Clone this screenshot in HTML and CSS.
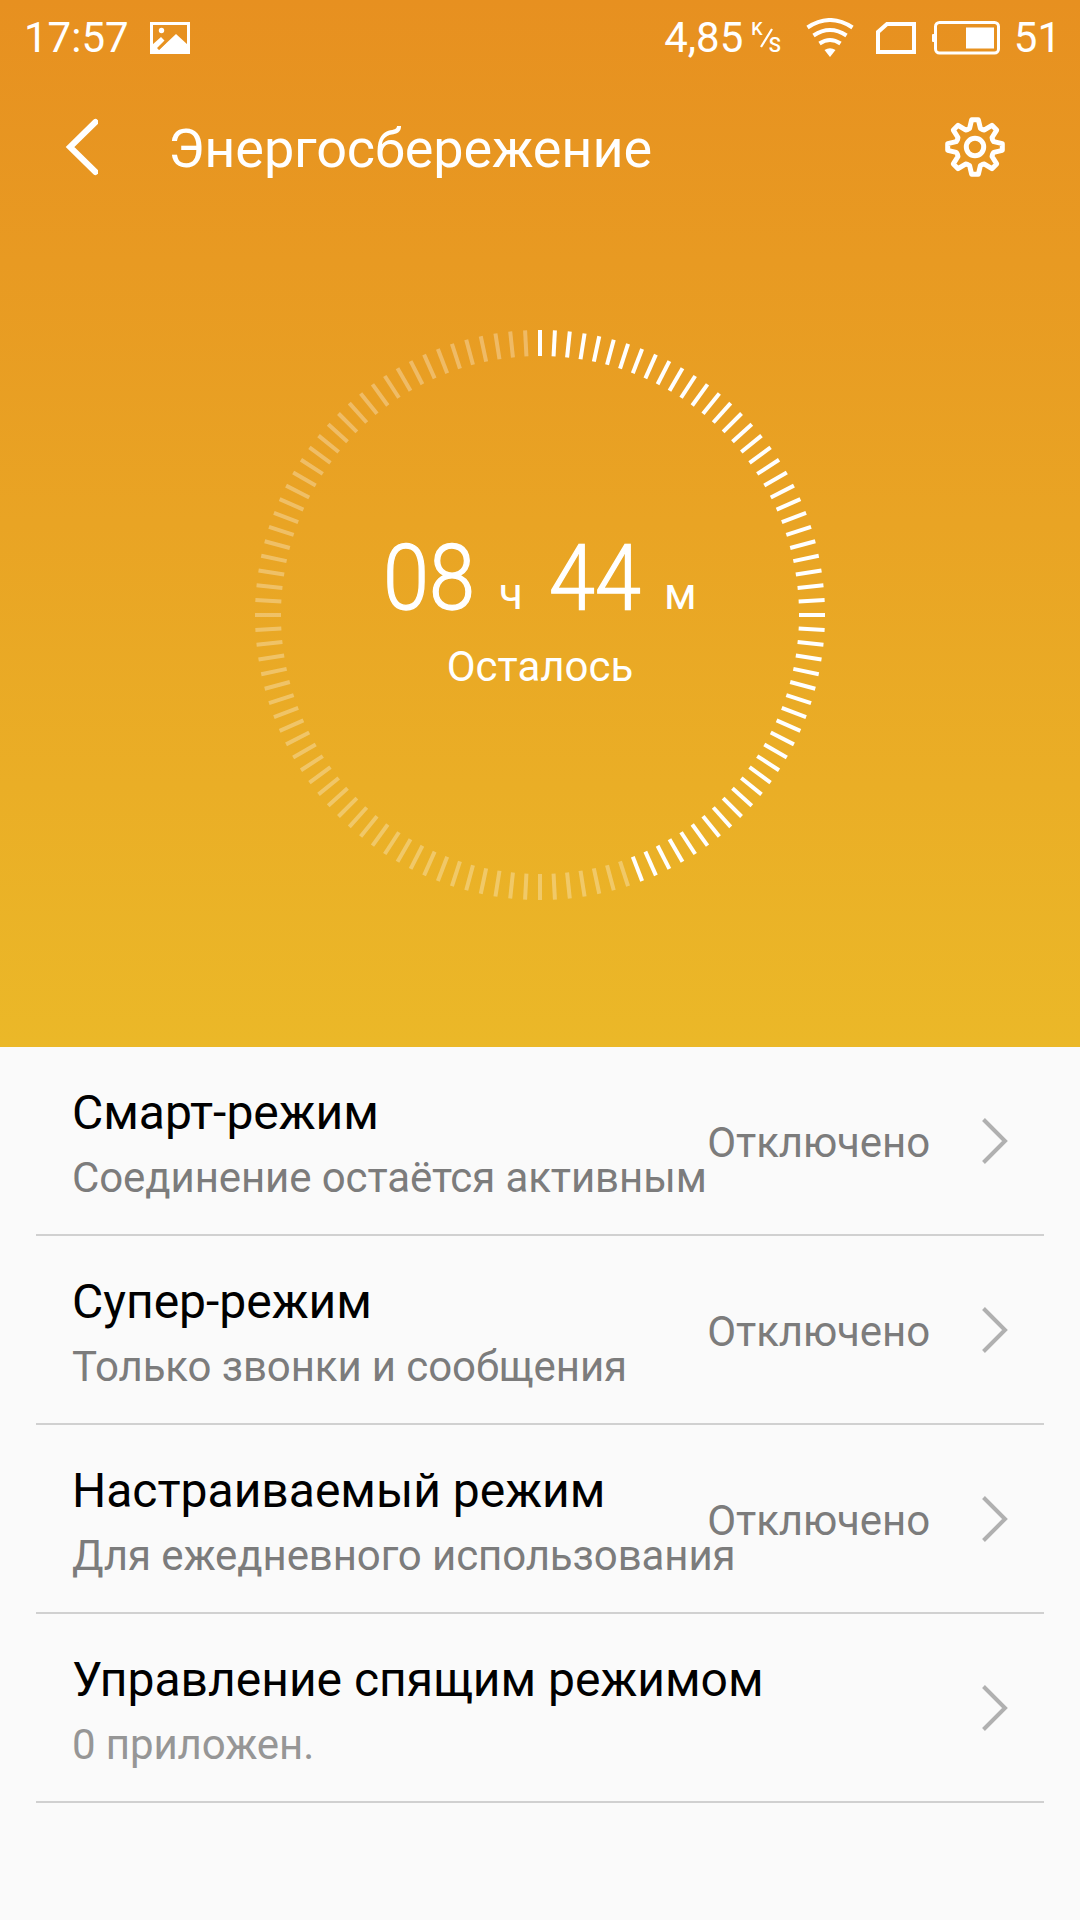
FILE: index.html
```html
<!DOCTYPE html>
<html lang="ru">
<head>
  <meta charset="UTF-8">
  <meta name="viewport" content="width=device-width, initial-scale=1.0">
  <title>Энергосбережение</title>
  <link rel="stylesheet" href="styles.css">
</head>
<body>
  <div class="top">
    <div class="status-bar">
      <span class="clock">17:57</span>
      <svg class="picture-icon" width="40" height="32" viewBox="0 0 40 32">
        <path d="M1.5 1.5H38.5V30.5H1.5Z" fill="none" stroke="#fff" stroke-width="3"/>
        <circle cx="11.5" cy="8.5" r="2.7" fill="#fff"/>
        <path d="M2 23L11 15L14.500 18.500L7 26L9 28L26 12L38 23V31H2Z" fill="#fff"/>
        <path d="M8.500 27L15.500 20" stroke="#e79220" stroke-width="2"/>
      </svg>
      <span class="speed">4,85</span>
      <span class="unit"><span class="unit-k">K</span><svg class="slash" width="13" height="20" viewBox="0 0 13 20"><path d="M1 19L12 1" stroke="#fff" stroke-width="2.200"/></svg><span class="unit-s">S</span></span>
      <svg class="wifi-icon" width="48" height="40" viewBox="0 0 48 40">
        <g fill="none" stroke="#fff" stroke-width="4">
          <path d="M1.500 9.500Q24 -5.500 46.500 9.500"/>
          <path d="M7.500 17.500Q24 6.500 40.500 17.500"/>
          <path d="M13.500 25.500Q24 18.500 34.500 25.500"/>
        </g>
        <path d="M18.500 32Q24 28.500 29.500 32L24 39Z" fill="#fff"/>
      </svg>
      <svg class="sim-icon" width="40" height="32" viewBox="0 0 40 32">
        <path d="M11 2H38V30H2V10Z" fill="none" stroke="#fff" stroke-width="4"/>
      </svg>
      <svg class="battery-icon" width="68" height="34" viewBox="0 0 68 34">
        <rect x="3.500" y="1.500" width="63" height="30.500" rx="4" fill="none" stroke="#fff" stroke-width="3"/>
        <rect x="0" y="13" width="3" height="8" rx="1" fill="#fff"/>
        <rect x="34" y="6.500" width="28" height="21" fill="#fff"/>
      </svg>
      <span class="percent">51</span>
    </div>

    <div class="header">
      <svg class="back" width="34" height="58" viewBox="0 0 34 58">
        <path d="M31.500 4L6 29L31.500 54" fill="none" stroke="#fff" stroke-width="6" stroke-linecap="round"/>
      </svg>
      <h1>Энергосбережение</h1>
      <svg class="gear" width="60" height="60" viewBox="-30 -30 60 60">
        <path id="gear-outline" fill="none" stroke="#fff" stroke-width="5" stroke-linejoin="round"/>
        <circle r="8.700" fill="none" stroke="#fff" stroke-width="5"/>
      </svg>
    </div>

    <div class="dial">
      <svg class="ring" width="570" height="570" viewBox="-285 -285 570 570"></svg>
      <div class="dial-text">
        <div class="time">
          <span class="digits">08</span>
          <span class="letter hours">ч</span>
          <span class="digits">44</span>
          <span class="letter minutes">м</span>
        </div>
        <p class="left">Осталось</p>
      </div>
    </div>
  </div>

  <div class="list">
    <div class="row">
      <div class="info">
        <h2>Смарт-режим</h2>
        <p>Соединение остаётся активным</p>
      </div>
      <span class="state">Отключено</span>
      <svg class="arrow" width="28" height="48" viewBox="0 0 28 48"><path d="M2.500 2.500L24 24L2.500 45.500"/></svg>
    </div>
    <div class="row">
      <div class="info">
        <h2>Супер-режим</h2>
        <p>Только звонки и сообщения</p>
      </div>
      <span class="state">Отключено</span>
      <svg class="arrow" width="28" height="48" viewBox="0 0 28 48"><path d="M2.500 2.500L24 24L2.500 45.500"/></svg>
    </div>
    <div class="row">
      <div class="info">
        <h2>Настраиваемый режим</h2>
        <p>Для ежедневного использования</p>
      </div>
      <span class="state">Отключено</span>
      <svg class="arrow" width="28" height="48" viewBox="0 0 28 48"><path d="M2.500 2.500L24 24L2.500 45.500"/></svg>
    </div>
    <div class="row">
      <div class="info">
        <h2>Управление спящим режимом</h2>
        <p class="count">0 приложен.</p>
      </div>
      <svg class="arrow" width="28" height="48" viewBox="0 0 28 48"><path d="M2.500 2.500L24 24L2.500 45.500"/></svg>
    </div>
  </div>

  <script>
    // 120 ticks, one every 3 degrees
    const ring = document.querySelector('.ring');
    const active = 54;

    for (let i = 0; i < 120; i++) {
      const tick = document.createElementNS('http://www.w3.org/2000/svg', 'line');
      tick.setAttribute('y1', -285);
      tick.setAttribute('y2', -259);
      tick.setAttribute('transform', `rotate(${i * 3})`);
      tick.setAttribute('class', i < active ? 'tick on' : 'tick');
      ring.appendChild(tick);
    }

    // Gear with 8 teeth: [angle from the tooth centre, radius]
    const tooth = [[-22.5, 19], [-16, 19.5], [-7, 27.5], [7, 27.5], [16, 19.5]];
    const points = [];
    for (let i = 0; i < 8; i++) {
      tooth.forEach(([angle, r]) => {
        const a = (i * 45 + angle) * Math.PI / 180;
        points.push((r * Math.sin(a)).toFixed(2) + ' ' + (-r * Math.cos(a)).toFixed(2));
      });
    }
    document.getElementById('gear-outline').setAttribute('d', 'M' + points.join('L') + 'Z');
  </script>
</body>
</html>
```
FILE: styles.css
```css
* {
  box-sizing: border-box;
}
body {
  margin: 0;
  font-family: Roboto, sans-serif;
  background-color: #fafafa;
  color: #000;
}
h1, h2, p {
  margin: 0;
  font-weight: 400;
}
svg {
  display: block;
  flex: none;
}
.top {
  height: 1047px;
  color: #fff;
  background: linear-gradient(#e79020, #ebb828);
}
.status-bar {
  display: flex;
  align-items: center;
  height: 76px;
  padding: 0 19px 0 24px;
  font-size: 42px;
  line-height: 50px;
  white-space: nowrap;
}
.clock {
  width: 126px;
}
.speed {
  margin-left: auto;
}
.unit {
  display: flex;
  align-items: center;
  height: 32px;
  margin-left: 8px;
}
.unit-k {
  align-self: flex-start;
  font-size: 18px;
  font-weight: 500;
  line-height: 14px;
}
.slash {
  margin: 0 -4px 0 -3px;
}
.unit-s {
  align-self: flex-end;
  font-size: 20px;
  font-weight: 500;
  line-height: 17px;
}
.wifi-icon {
  margin-left: 25px;
}
.sim-icon {
  margin-left: 22px;
}
.battery-icon {
  margin-left: 16px;
}
.percent {
  margin-left: 14px;
}
.header {
  display: flex;
  align-items: center;
  height: 142px;
  padding: 0 75px 0 64px;
}
h1 {
  flex: 1;
  margin-left: 70px;
  padding-top: 3px;
  font-size: 54px;
  line-height: 64px;
  letter-spacing: -0.1px;
}
.dial {
  display: grid;
  justify-content: center;
  margin-top: 112px;
}
.ring, .dial-text {
  grid-area: 1 / 1;
}
.tick {
  stroke: #fff;
  stroke-width: 4;
  opacity: 0.3;
}
.tick.on {
  opacity: 1;
}
.dial-text {
  padding-top: 199px;
  text-align: center;
}
.time {
  display: flex;
  align-items: baseline;
  height: 100px;
  padding-left: 128px;
}
/* narrow digits */
.digits {
  width: 94px;
  font-size: 90px;
  font-weight: 300;
  line-height: 100px;
  text-align: left;
  -webkit-text-stroke: 1.3px #fff;
  transform: scaleX(0.92);
  transform-origin: left;
}
.letter {
  font-size: 44px;
}
.hours {
  margin: 0 26px 0 22px;
}
.minutes {
  margin-left: 21px;
}
.left {
  margin-top: 13px;
  font-size: 42px;
  line-height: 50px;
}
.row {
  display: flex;
  align-items: center;
  height: 189px;
  margin: 0 36px;
  padding: 0 35px 0 36px;
  border-bottom: 2px solid #d0d0d0;
}
.info {
  flex: 1;
  min-width: 0;
  padding-top: 7px;
  white-space: nowrap;
}
h2 {
  font-size: 48px;
  line-height: 56px;
}
.info p {
  margin-top: 12px;
  font-size: 42px;
  line-height: 50px;
  letter-spacing: -0.1px;
  color: #7c7c7c;
}
.info .count {
  color: #969696;
}
.state {
  padding-top: 4px;
  font-size: 42px;
  line-height: 50px;
  letter-spacing: -0.1px;
  color: #7c7c7c;
}
.arrow {
  margin-left: 51px;
}
.arrow path {
  fill: none;
  stroke: #b0b0b0;
  stroke-width: 4;
}
```
